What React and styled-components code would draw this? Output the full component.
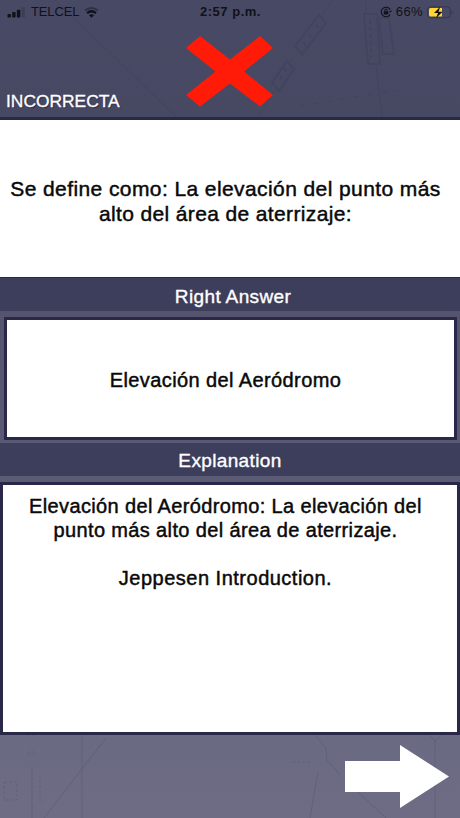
import React from 'react'
import styled, { createGlobalStyle } from 'styled-components'

const GlobalStyle = createGlobalStyle`
  * {
    box-sizing: border-box;
  }
  body {
    margin: 0;
    font-family: 'Liberation Sans', Arial, sans-serif;
  }
`
const Screen = styled.div`
  position: relative;
  isolation: isolate;
  display: flex;
  flex-direction: column;
  width: 460px;
  height: 818px;
  overflow: hidden;
  background: linear-gradient(#484a65 0, #474862 117px, #55546f 310px, #5c5b76 480px, #6b6a83 735px, #6d6c84 818px);
`
const Backdrop = styled.svg`
  position: absolute;
  inset: 0;
  z-index: -1;
  fill: none;
  stroke: #292b43;
  stroke-opacity: 0.15;
`
const Header = styled.header`
  display: flex;
  flex-direction: column;
  height: 120px;
  border-bottom: 3px solid #292849;
`
const StatusBar = styled.div`
  display: grid;
  grid-template-columns: 1fr auto 1fr;
  align-items: center;
  height: 24px;
  padding: 0 6px 0 7px;
  color: #10111a;
`
const StatusGroup = styled.div`
  display: flex;
  align-items: center;
  justify-content: ${props => props.align || 'flex-start'};
  gap: ${props => props.gap || 5}px;
`
const StatusText = styled.span`
  font-size: 13px;
  font-weight: ${props => props.weight || 400};
  letter-spacing: ${props => props.spacing || 0}px;
  line-height: 24px;
  white-space: nowrap;
`
const ResultRow = styled.div`
  display: grid;
  grid-template-columns: 1fr 88px 1fr;
  flex: 1;
  padding: 12px 6px 6px;
`
const Result = styled.div`
  align-self: end;
  color: white;
  font-size: 17.4px;
  line-height: 20px;
  -webkit-text-stroke: 0.35px white;
  text-shadow: 1px 1px 1px #292849;
`
const Question = styled.section`
  display: flex;
  align-items: center;
  justify-content: center;
  height: 157px;
  padding: 5px 9px 0 0;
  background: white;
`
const Copy = styled.p`
  margin: 0;
  color: #090909;
  font-size: ${props => props.size || 20}px;
  line-height: ${props => props.leading || 24}px;
  text-align: center;
  white-space: nowrap;
  -webkit-text-stroke: 0.45px #090909;
`
const Line = styled.span`
  display: block;
  letter-spacing: ${props => props.spacing || 0.36}px;
`
const Title = styled.h2`
  height: ${props => props.height}px;
  margin: 0;
  padding-left: ${props => props.indent || 0}px;
  border-top: ${props => (props.edge ? '1px solid #292849' : 'none')};
  background: #3d3e5b;
  color: white;
  font-size: 19px;
  font-weight: 400;
  line-height: ${props => props.leading}px;
  letter-spacing: 0.36px;
  text-align: center;
  -webkit-text-stroke: 0.35px white;
`
const Answer = styled.section`
  display: flex;
  align-items: center;
  justify-content: center;
  height: 123px;
  margin: 6px 3px 3px 4px;
  padding: 3px 10px 0 0;
  border: 3px solid #292849;
  background: white;
`
const Explanation = styled.section`
  height: 253px;
  margin-top: 6px;
  padding: 9px 9px 0 0;
  border: 3px solid #292849;
  background: white;
`
const Footer = styled.footer`
  display: flex;
  justify-content: flex-end;
  padding: 9px 11px 0 0;
`
const NextButton = styled.button`
  width: 104px;
  height: 65px;
  padding: 0;
  border: 0;
  background: none;
`

function ChartBackdrop() {
  return (
    <Backdrop width="460" height="818">
      <path d="M55 0l130 125M332 0l-10 15M296 54l-6 8M275 90l-17 27M366 0v13M376 66l6 51" />
      <g strokeWidth="2">
        <path d="M319 15l7 8-24 31-7-8zM287 61l7 8-15 22-7-8zM364 14h13l3 50h-12zM379 18h10l5 36h-11z" />
        <path d="M316 25l5 6M309 34l5 6M303 42l5 6M284 68l5 6M280 76l4 6M370 20l1 38" strokeDasharray="4 3" />
      </g>
      <path d="M299 106l100-16" strokeDasharray="5 9" />
      <path d="M106 738L44 818M82 735v83M32 767v51M315 735l11 13 1 12 13 15M318 772l-8 46M350 785l36 33M435 740v78M430 735l5 6 7-6" />
      <path d="M27 735h9M28 754l4-5 4 5zM4 782h13v18H4zM40 775v27M292 762h20" strokeDasharray="3 2" />
    </Backdrop>
  )
}

function SignalIcon() {
  return (
    <svg width="19" height="11" viewBox="0 0 19 11" fill="currentColor">
      <rect x="0.5" y="7" width="3.4" height="3.5" rx="0.8" />
      <rect x="5.2" y="5" width="3.4" height="5.5" rx="0.8" />
      <rect x="9.9" y="2.7" width="3.4" height="7.8" rx="0.8" />
      <rect x="14.6" y="0.3" width="3.4" height="10.2" rx="0.8" opacity="0.18" />
    </svg>
  )
}

function WifiIcon() {
  return (
    <svg width="15" height="11" viewBox="0 0 15 11" fill="none" stroke="currentColor">
      <path d="M1 3.5q6.5-5 13 0" strokeWidth="1.8" opacity="0.45" />
      <path d="M3 6.1q4.5-3.7 9 0" strokeWidth="2.2" />
      <path d="M5 8.2q2.5-1.9 5 0L7.5 10.8z" fill="currentColor" stroke="none" />
    </svg>
  )
}

function RotationLockIcon() {
  return (
    <svg width="12" height="12" viewBox="0 0 12 12" fill="none" stroke="currentColor">
      <path d="M10.2 3.6A4.8 4.8 0 1 0 10.2 8.4M11.5 4.8L9.3 6.4" strokeWidth="1.1" />
      <rect x="3.7" y="5.3" width="4.6" height="3.3" rx="0.5" fill="currentColor" stroke="none" />
      <path d="M4.7 5.5V4.4a1.3 1.3 0 0 1 2.6 0v1.1" />
    </svg>
  )
}

function BatteryIcon() {
  return (
    <svg width="27" height="13" viewBox="0 0 27 13">
      <rect x="0.6" y="0.8" width="22.6" height="11" rx="3" fill="none" stroke="#25273d" strokeOpacity="0.55" />
      <path d="M3.5 2H15v8.6H3.5Q2 10.6 2 9V3.5Q2 2 3.5 2z" fill="#ffd52e" />
      <path d="M24.5 4.5q2.2 1.8 0 3.8z" fill="#25273d" opacity="0.6" />
      <path d="M13.2 0.8L7 7h4l-2 5.3L15.6 5.8h-4z" fill="#10111a" />
    </svg>
  )
}

function CrossIcon() {
  return (
    <svg width="88" height="71" viewBox="0 0 88 71">
      <path d="M14 0L44 23.5 74 0 87 12 58 35.5 87 59 74 70.5 44 47.5 14 70.5 0 59 29.5 35.5 0 12z" fill="#ff1b08" />
    </svg>
  )
}

function App() {
  return (
    <>
      <GlobalStyle />
      <Screen>
        <ChartBackdrop />
        <Header>
          <StatusBar>
            <StatusGroup>
              <SignalIcon />
              <StatusText spacing={-0.15}>TELCEL</StatusText>
              <WifiIcon />
            </StatusGroup>
            <StatusText weight="700" spacing={0.5}>2:57 p.m.</StatusText>
            <StatusGroup align="flex-end" gap={4}>
              <RotationLockIcon />
              <StatusText spacing={0.4}>66%</StatusText>
              <BatteryIcon />
            </StatusGroup>
          </StatusBar>
          <ResultRow>
            <Result>INCORRECTA</Result>
            <CrossIcon />
          </ResultRow>
        </Header>
        <Question>
          <Copy size={21} leading={25}>
            <Line spacing={0.41}>Se define como: La elevación del punto más</Line>
            <Line>alto del área de aterrizaje:</Line>
          </Copy>
        </Question>
        <Title height={34} leading={37} indent={6} edge>Right Answer</Title>
        <Answer>
          <Copy>
            <Line spacing={0.4}>Elevación del Aeródromo</Line>
          </Copy>
        </Answer>
        <Title height={33} leading={35}>Explanation</Title>
        <Explanation>
          <Copy>
            <Line>Elevación del Aeródromo: La elevación del</Line>
            <Line>punto más alto del área de aterrizaje.</Line>
            <br />
            <Line spacing={0.5}>Jeppesen Introduction.</Line>
          </Copy>
        </Explanation>
        <Footer>
          <NextButton aria-label="Next">
            <svg width="104" height="65" viewBox="0 0 104 65">
              <path d="M0 17h55V1l49 31.5L55 64V48H0z" fill="white" />
            </svg>
          </NextButton>
        </Footer>
      </Screen>
    </>
  )
}
export default App
